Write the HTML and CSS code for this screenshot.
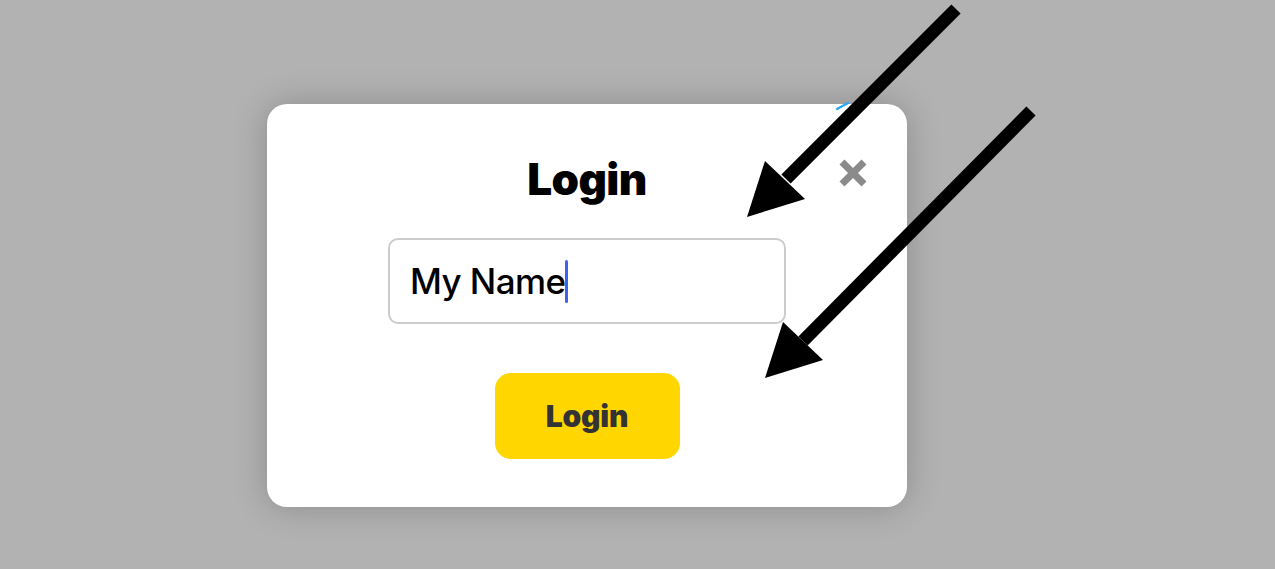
FILE: index.html
```html
<!DOCTYPE html>
<html lang="en">
<head>
<meta charset="utf-8">
<title>Login</title>
<link rel="stylesheet" href="styles.css">
</head>
<body>
<div class="stage">
  <div class="card">
    <div class="card-head">
      <h1 class="title">Login</h1>
      <button class="close" aria-label="Close">
        <svg viewBox="0 0 30 30" width="30" height="30"><path d="M4 4 L26 26 M26 4 L4 26" stroke="#8a8a8a" stroke-width="7" stroke-linecap="butt" fill="none"/></svg>
      </button>
    </div>
    <div class="field"><span class="field-text">My Name</span><span class="caret"></span></div>
    <button class="login-btn">Login</button>
  </div>
</div>
<svg class="arrows" width="1275" height="569" viewBox="0 0 1275 569">
  <path d="M837 109 L848 103" stroke="#2aa8f2" stroke-width="2.5" stroke-linecap="round"/>
  <line x1="956" y1="9" x2="786" y2="179" stroke="#000" stroke-width="13"/>
  <polygon points="747,217 765,161 805,199" fill="#000"/>
  <line x1="1031" y1="111" x2="803" y2="341" stroke="#000" stroke-width="13"/>
  <polygon points="765,378 783,322 823,360" fill="#000"/>
</svg>
</body>
</html>
```
FILE: styles.css
```css
html, body {
  margin: 0;
  padding: 0;
}
body {
  background: #b2b2b2;
  width: 1275px;
  height: 569px;
  overflow: hidden;
  position: relative;
  font-family: Inter, "Noto Sans", sans-serif;
}
.stage {
  padding: 104px 0 0 267px;
  display: flex;
}
.card {
  width: 640px;
  height: 403px;
  box-sizing: border-box;
  background: #fff;
  border-radius: 20px;
  box-shadow: 0 0 34px rgba(0, 0, 0, 0.22);
  padding: 48px 0 48px 0;
  display: flex;
  flex-direction: column;
  align-items: center;
}
.card-head {
  position: relative;
  width: 100%;
  display: flex;
  justify-content: center;
}
.title {
  margin: 0;
  font-size: 44px;
  line-height: 54px;
  font-weight: 900;
  color: #000;
  letter-spacing: -0.6px;
}
.close {
  position: absolute;
  left: 571px;
  top: 6px;
  width: 30px;
  height: 30px;
  padding: 0;
  border: 0;
  background: none;
  display: flex;
}
.field {
  margin-top: 32px;
  width: 398px;
  height: 86px;
  box-sizing: border-box;
  border: 2px solid #cccccc;
  border-radius: 10px;
  padding: 0 20px;
  display: flex;
  align-items: center;
}
.field-text {
  font-size: 35px;
  font-weight: 500;
  color: #000;
  letter-spacing: -0.6px;
}
.caret {
  width: 3px;
  height: 43px;
  background: #4062ea;
  border-radius: 1.5px;
  margin-left: 0;
}
.login-btn {
  margin-top: 49px;
  width: 185px;
  height: 86px;
  border: 0;
  border-radius: 16px;
  background: #ffd600;
  color: #333;
  font-family: Inter, "Noto Sans", sans-serif;
  font-size: 30px;
  font-weight: 900;
  letter-spacing: -0.2px;
  padding: 0;
}
.arrows {
  position: absolute;
  left: 0;
  top: 0;
  pointer-events: none;
}
```
